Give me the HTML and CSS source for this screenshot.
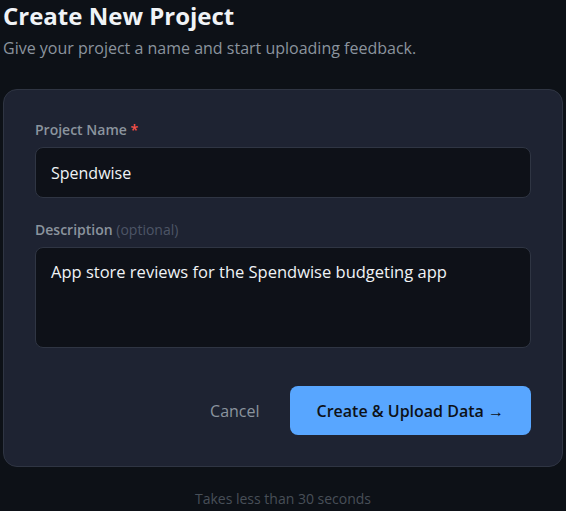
FILE: index.html
```html
<!DOCTYPE html>
<html>

<head>
    <meta name="viewport" content="width=device-width, initial-scale=1">
    <link rel="stylesheet" href="styles.css">
</head>

<body>
    <div class="page">
        <h1 class="title">Create New Project</h1>
        <p class="subtitle">Give your project a name and start uploading feedback.</p>

        <form class="card" onsubmit="return false">
            <div class="field">
                <label for="name">Project Name <span class="req">*</span></label>
                <input type="text" id="name" name="name" value="Spendwise">
            </div>

            <div class="field">
                <label for="desc">Description <span class="opt">(optional)</span></label>
                <textarea id="desc" name="desc" rows="3">App store reviews for the Spendwise budgeting app</textarea>
            </div>

            <div class="actions">
                <button type="button" class="cancel">Cancel</button>
                <button type="submit" class="primary">Create &amp; Upload Data &rarr;</button>
            </div>
        </form>

        <p class="hint">Takes less than 30 seconds</p>
    </div>
</body>

</html>
```

FILE: styles.css
```css
body {
    margin: 0;
    background-color: #0d1117;
    font-family: "Open Sans", "Noto Sans", sans-serif;
    color: #e6edf3;
}

.page {
    width: 560px;
    padding: 1px 3px 0 3px;
}

.title {
    margin: 0;
    font-size: 24px;
    line-height: 30px;
    font-weight: 700;
    color: #f0f3f6;
}

.subtitle {
    margin: 5px 0 0 0;
    font-size: 16px;
    line-height: 24px;
    color: #8b949e;
}

.card {
    margin-top: 29px;
    box-sizing: border-box;
    width: 560px;
    padding: 32px 31px 31px 31px;
    background-color: #1e2332;
    border: 1px solid #2f3543;
    border-radius: 14px;
}

.field {
    margin-bottom: 24px;
}

.field label {
    display: block;
    font-size: 14px;
    line-height: 16px;
    font-weight: 600;
    color: #8b949e;
    margin-bottom: 9px;
}

.req {
    color: #f85149;
}

.opt {
    font-weight: 400;
    color: #4d5566;
}

input[type=text],
textarea {
    display: block;
    width: 100%;
    box-sizing: border-box;
    background-color: #0e1118;
    border: 1px solid #2f3543;
    border-radius: 8px;
    color: #f0f3f6;
    font-family: inherit;
    font-size: 16px;
    padding: 0 15px;
    outline: none;
}

input[type=text] {
    height: 51px;
}

textarea {
    height: 101px;
    padding-top: 12px;
    line-height: 24px;
    font-size: 16.5px;
    resize: none;
}

.actions {
    display: flex;
    justify-content: flex-end;
    align-items: center;
    gap: 18px;
    margin-top: 38px;
}

.actions button {
    font-family: inherit;
    font-size: 16px;
    border: none;
    cursor: pointer;
}

.cancel {
    background: none;
    color: #8b949e;
    padding: 8px 12px;
}

.primary {
    height: 49px;
    padding: 0 27px;
    background-color: #58a6ff;
    color: #0d1117;
    font-weight: 600;
    border-radius: 8px;
}

.hint {
    margin: 22px 0 0 0;
    text-align: center;
    font-size: 14px;
    line-height: 20px;
    color: #484f58;
}
```
